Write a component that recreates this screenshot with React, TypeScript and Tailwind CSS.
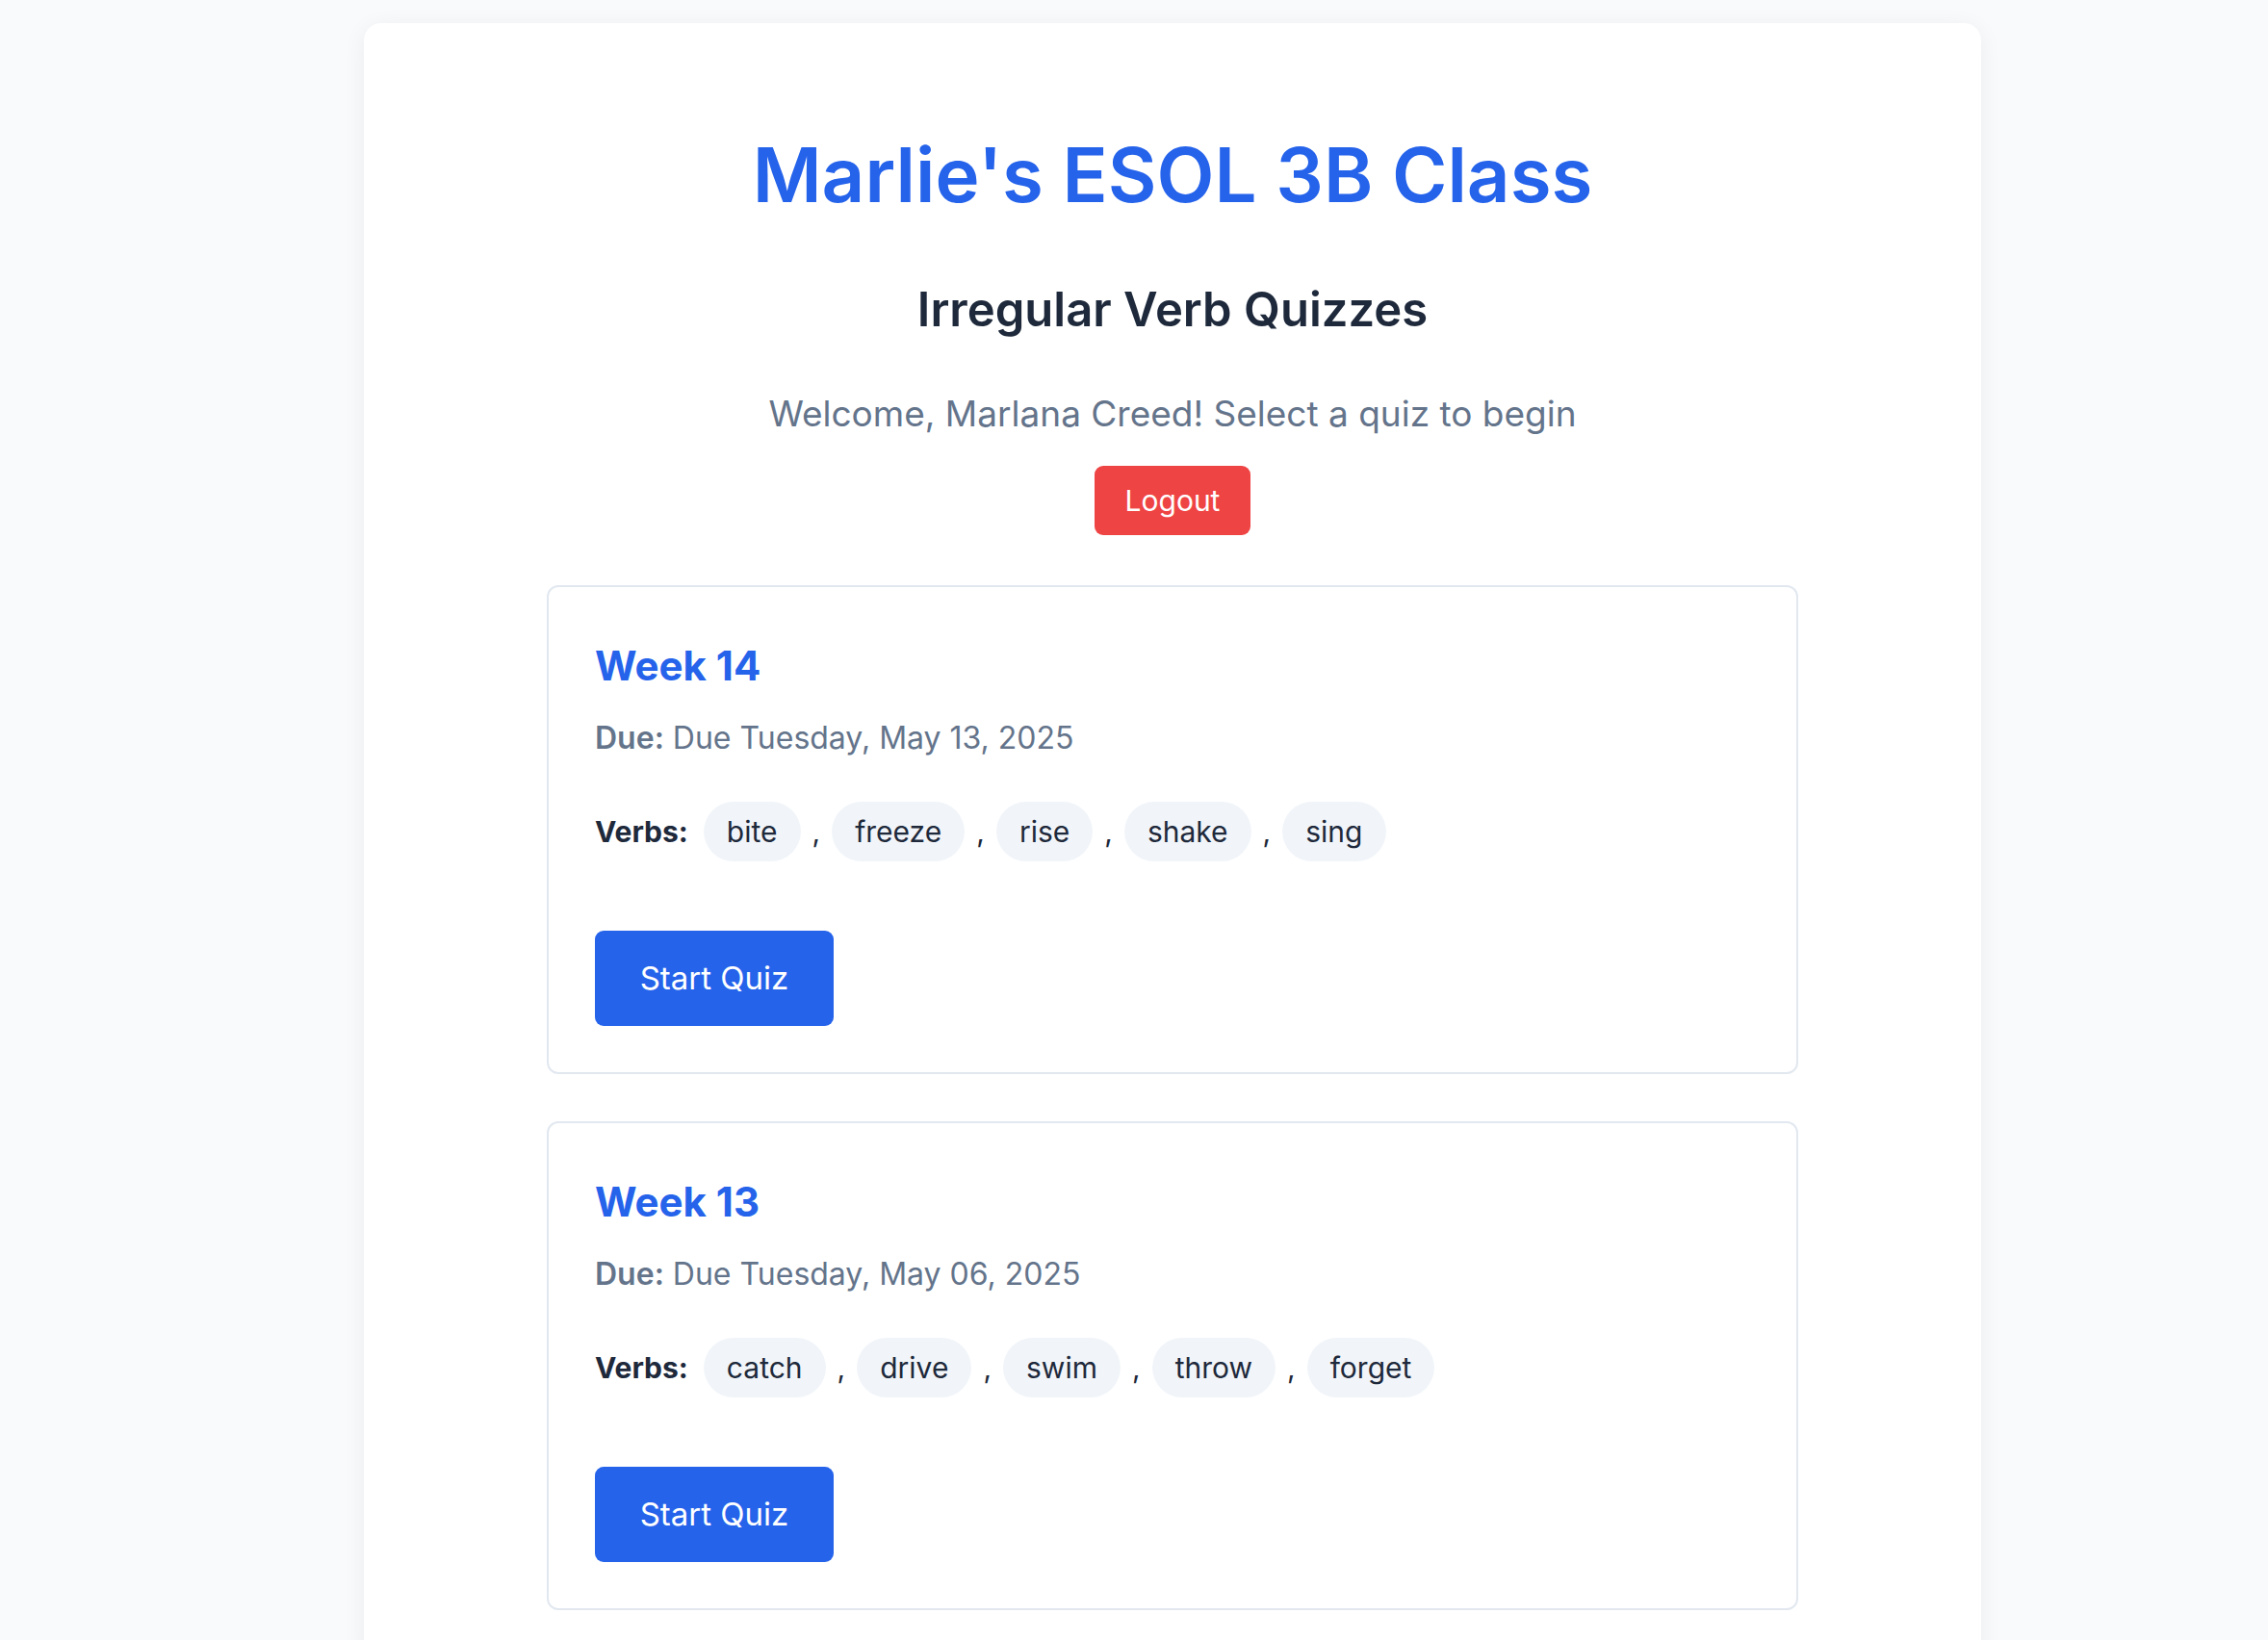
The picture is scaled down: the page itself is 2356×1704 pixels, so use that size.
import * as React from 'react'

type Quiz = {
  week: string
  due: string
  verbs: string[]
}

const quizzes: Quiz[] = [
  { week: 'Week 14', due: 'Due Tuesday, May 13, 2025', verbs: ['bite', 'freeze', 'rise', 'shake', 'sing'] },
  { week: 'Week 13', due: 'Due Tuesday, May 06, 2025', verbs: ['catch', 'drive', 'swim', 'throw', 'forget'] },
]

function QuizCard({ quiz }: { quiz: Quiz }) {
  return (
    <div className="rounded-[12px] border-2 border-[#e2e8f0] bg-white px-[48px] pt-[52px] pb-[48px]">
      <h3 className="text-[42px] leading-[60px] font-bold text-[#2563eb]">{quiz.week}</h3>
      <p className="mt-[22px] text-[32px] leading-[45px] text-[#64748b]">
        <span className="font-semibold">Due:</span> {quiz.due}
      </p>
      <div className="mt-[44px] flex items-center gap-[12px] text-[30px]">
        <span className="mr-[4px] font-bold text-[#1e293b]">Verbs:</span>
        {quiz.verbs.map((v, i) => (
          <React.Fragment key={v}>
            <span className="rounded-full bg-[#f1f5f9] px-[24px] leading-[62px] text-[#1e293b]">{v}</span>
            {i < quiz.verbs.length - 1 && <span className="text-[#1e293b]">,</span>}
          </React.Fragment>
        ))}
      </div>
      <button className="mt-[72px] h-[99px] w-[248px] rounded-[9px] bg-[#2563eb] text-[33px] text-white">
        Start Quiz
      </button>
    </div>
  )
}

export default function App() {
  return (
    <div className="min-h-screen bg-[#f8fafc] pt-[24px] pl-[80px] font-['Inter',sans-serif]">
      <div className="mx-auto w-[1680px] rounded-[18px] bg-white px-[190px] pt-[110px] pb-[60px] shadow-[0_4px_24px_rgba(15,23,42,0.06)]">
        <h1 className="text-center text-[78px] leading-[96px] font-semibold text-[#2563eb]">
          Marlie's ESOL 3B Class
        </h1>
        <h2 className="mt-[62px] text-center text-[49px] leading-[60px] font-semibold text-[#1e293b]">
          Irregular Verb Quizzes
        </h2>
        <p className="mt-[54px] text-center text-[37px] leading-[48px] text-[#64748b]">
          Welcome, Marlana Creed! Select a quiz to begin
        </p>
        <div className="mt-[30px] flex justify-center">
          <button className="h-[72px] w-[162px] rounded-[9px] bg-[#ef4444] text-[30px] text-white">Logout</button>
        </div>
        <div className="mt-[52px] flex flex-col gap-[49px]">
          {quizzes.map((q) => (
            <QuizCard key={q.week} quiz={q} />
          ))}
        </div>
      </div>
    </div>
  )
}
